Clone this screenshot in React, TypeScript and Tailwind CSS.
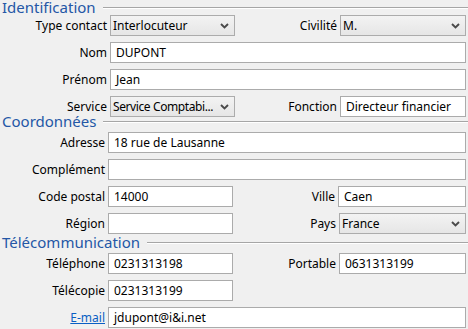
import React from 'react';

const font = { fontFamily: '"Noto Sans", "Open Sans", sans-serif' };

function Chevron() {
  return (
    <svg width="9" height="6" viewBox="0 0 9 6" className="shrink-0">
      <path d="M1 1 L4.5 4.5 L8 1" fill="none" stroke="#4a4a4a" strokeWidth="1.9" />
    </svg>
  );
}

function Title({ text, className }: { text: string; className: string }) {
  return (
    <div className={`flex h-[15px] items-center ${className}`}>
      <span className="whitespace-nowrap pl-[2px] text-[15px] leading-[15px] text-[#2457a6]">{text}</span>
      <div className="ml-[7px] flex-1 border-t border-b border-t-[#a6a6a6] border-b-white" />
    </div>
  );
}

function Box({ value, w }: { value?: string; w: string }) {
  return (
    <div className={`h-[21px] ${w} flex items-center border border-[#ababab] bg-white pl-[5px] text-[12px] text-black`}>
      {value}
    </div>
  );
}

function Select({ value, w, tight }: { value: string; w: string; tight?: boolean }) {
  return (
    <div className={`h-[21px] ${w} flex items-center justify-between border border-[#acacac] bg-gradient-to-b from-[#f3f3f3] to-[#e6e6e6] pl-[2px] pr-[5px] text-[12px] text-black`}>
      <span className={tight ? 'overflow-hidden whitespace-nowrap tracking-[-0.4px]' : 'overflow-hidden whitespace-nowrap'}>{value}</span>
      <Chevron />
    </div>
  );
}

function Label({ text, w }: { text: React.ReactNode; w: string }) {
  return <div className={`${w} shrink-0 pr-[3px] text-right text-[12px] text-black`}>{text}</div>;
}

export default function App() {
  return (
    <div className="h-[329px] w-[468px] overflow-hidden bg-[#f0f0f0]" style={font}>
      <Title text="Identification" className="" />
      <div className="flex flex-col gap-[6px] pr-[2px]">
        <div className="flex items-center">
          <Label text="Type contact" w="w-[110px]" />
          <Select value="Interlocuteur" w="w-[125px]" />
          <Label text="Civilité" w="flex-1" />
          <Select value="M." w="w-[126px]" />
        </div>
        <div className="flex items-center">
          <Label text="Nom" w="w-[110px]" />
          <div className="flex-1"><Box value="DUPONT" w="w-full" /></div>
        </div>
        <div className="flex items-center">
          <Label text="Prénom" w="w-[110px]" />
          <div className="flex-1"><Box value="Jean" w="w-full" /></div>
        </div>
        <div className="flex items-center">
          <Label text="Service" w="w-[110px]" />
          <Select value="Service Comptabi..." w="w-[125px]" tight />
          <Label text="Fonction" w="flex-1" />
          <Box value="Directeur financier" w="w-[126px]" />
        </div>
      </div>

      <Title text="Coordonnées" className="-mt-[3px]" />
      <div className="mt-[3px] flex flex-col gap-[6px] pr-[2px]">
        <div className="flex items-center">
          <Label text="Adresse" w="w-[108px]" />
          <div className="flex-1"><Box value="18 rue de Lausanne" w="w-full" /></div>
        </div>
        <div className="flex items-center">
          <Label text="Complément" w="w-[108px]" />
          <div className="flex-1"><Box w="w-full" /></div>
        </div>
        <div className="flex items-center">
          <Label text="Code postal" w="w-[108px]" />
          <Box value="14000" w="w-[125px]" />
          <Label text="Ville" w="flex-1" />
          <Box value="Caen" w="w-[128px]" />
        </div>
        <div className="flex items-center">
          <Label text="Région" w="w-[108px]" />
          <Box w="w-[125px]" />
          <Label text="Pays" w="flex-1" />
          <Select value="France" w="w-[127px]" />
        </div>
      </div>

      <Title text="Télécommunication" className="mt-[1px]" />
      <div className="mt-[3px] flex flex-col gap-[6px] pr-[2px]">
        <div className="flex items-center">
          <Label text="Téléphone" w="w-[108px]" />
          <Box value="0231313198" w="w-[125px]" />
          <Label text="Portable" w="flex-1" />
          <Box value="0631313199" w="w-[127px]" />
        </div>
        <div className="flex items-center">
          <Label text="Télécopie" w="w-[108px]" />
          <Box value="0231313199" w="w-[125px]" />
        </div>
        <div className="flex items-center">
          <Label text={<span className="text-[#0a5fc4] underline">E-mail</span>} w="w-[108px]" />
          <div className="flex-1"><Box value="jdupont@i&i.net" w="w-full" /></div>
        </div>
      </div>
    </div>
  );
}
